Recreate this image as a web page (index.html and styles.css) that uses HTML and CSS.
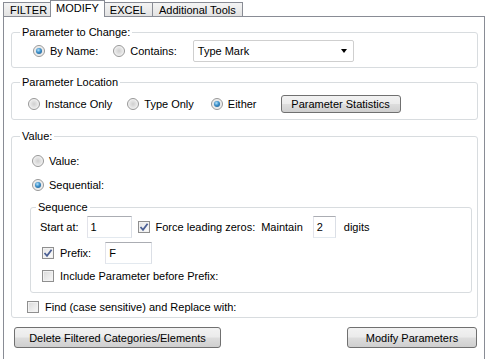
FILE: index.html
```html
<!DOCTYPE html>
<html lang="en">
<head>
  <meta charset="UTF-8" />
  <title>Modify Parameters</title>
  <link rel="stylesheet" href="styles.css">
</head>
<body>
  <div class="tabs">
    <div class="tab">FILTER</div>
    <div class="tab active">MODIFY</div>
    <div class="tab">EXCEL</div>
    <div class="tab">Additional Tools</div>
  </div>

  <div class="panel">
    <fieldset class="group g-change">
      <legend>Parameter to Change:</legend>
      <div class="row">
        <label class="opt"><span class="radio on"></span>By Name:</label>
        <label class="opt opt-contains"><span class="radio"></span>Contains:</label>
        <div class="combo">Type Mark<span class="arrow"></span></div>
      </div>
    </fieldset>

    <fieldset class="group g-location">
      <legend>Parameter Location</legend>
      <div class="row">
        <label class="opt"><span class="radio"></span>Instance Only</label>
        <label class="opt opt-type"><span class="radio"></span>Type Only</label>
        <label class="opt opt-either"><span class="radio on"></span>Either</label>
        <button class="btn btn-stats">Parameter Statistics</button>
      </div>
    </fieldset>

    <fieldset class="group g-value">
      <legend>Value:</legend>
      <div class="row row-value">
        <label class="opt"><span class="radio"></span>Value:</label>
      </div>
      <div class="row row-seq">
        <label class="opt"><span class="radio on"></span>Sequential:</label>
      </div>

      <fieldset class="group g-sequence">
        <legend>Sequence</legend>
        <div class="row row-start">
          <span>Start at:</span>
          <div class="field f-start">1</div>
          <span class="check on"><svg width="10" height="10" viewBox="0 0 10 10"><path d="M1.5 5 L4 7.8 L8.6 1.8" fill="none" stroke="#4b5f94" stroke-width="1.8"/></svg></span>
          <span class="lbl-zeros">Force leading zeros:</span>
          <span class="lbl-maintain">Maintain</span>
          <div class="field f-digits">2</div>
          <span class="lbl-digits">digits</span>
        </div>
        <div class="row row-prefix">
          <span class="check on"><svg width="10" height="10" viewBox="0 0 10 10"><path d="M1.5 5 L4 7.8 L8.6 1.8" fill="none" stroke="#4b5f94" stroke-width="1.8"/></svg></span>
          <span class="lbl">Prefix:</span>
          <div class="field f-prefix">F</div>
        </div>
        <div class="row row-include">
          <span class="check"></span>
          <span class="lbl">Include Parameter before Prefix:</span>
        </div>
      </fieldset>

      <div class="row row-find">
        <span class="check"></span>
        <span class="lbl">Find (case sensitive) and Replace with:</span>
      </div>
    </fieldset>

    <div class="actions">
      <button class="btn btn-delete">Delete Filtered Categories/Elements</button>
      <button class="btn btn-modify">Modify Parameters</button>
    </div>
  </div>
</body>
</html>
```

FILE: styles.css
```css
body {
  margin: 0;
  font-family: "Liberation Sans", Arial, sans-serif;
  font-size: 11px;
  color: #000;
  background: #fff;
  overflow: hidden;
}

/* pestañas */
.tabs {
  display: flex;
  align-items: flex-end;
  height: 16px;
  padding-left: 3px;
}

.tab {
  height: 13px;
  line-height: 14px;
  padding: 0 6px;
  border: 1px solid #898c95;
  border-bottom: none;
  margin-right: -1px;
  background: linear-gradient(#f4f4f4, #e3e3e3);
}

.tab.active {
  height: 16px;
  line-height: 14px;
  padding: 0 5px;
  margin: 0 -2px -1px -3px;
  background: #fff;
  position: relative;
  z-index: 1;
}

.panel {
  box-sizing: border-box;
  height: calc(100vh - 16px);
  border: 1px solid #898c95;
  border-bottom: none;
  margin: 0 1px 0 3px;
  padding: 8px 6px 0 7px;
}

/* grupos */
fieldset.group {
  margin: 0;
  padding: 0;
  min-width: 0;
  border: 1px solid #d8dcdf;
  border-radius: 3px;
}

legend {
  margin-left: 8px;
  padding: 0 2px;
  line-height: 14px;
}

.row {
  display: flex;
  align-items: center;
}

.opt {
  display: flex;
  align-items: center;
  gap: 5px;
}

.radio {
  flex: none;
  width: 12px;
  height: 12px;
  box-sizing: border-box;
  border: 1px solid #979797;
  border-radius: 50%;
  background: radial-gradient(circle, #cfcfcf 0, #e6e6e6 50%, #f7f7f7 75%, #fff 100%);
  position: relative;
}

.radio.on::after {
  content: '';
  position: absolute;
  inset: 2px;
  border-radius: 50%;
  background: radial-gradient(circle at 40% 35%, #b5e2fb 0, #3b8fc9 45%, #1c5485 100%);
}

.check {
  flex: none;
  width: 12px;
  height: 12px;
  box-sizing: border-box;
  border: 1px solid #8f8f8f;
  background: linear-gradient(135deg, #d9d9d9, #f8f8f8);
  box-shadow: inset 0 0 0 1px #f2f2f2;
  display: flex;
  align-items: center;
  justify-content: center;
}

.check.on {
  background: linear-gradient(135deg, #e4e4e4, #fdfdfd);
}

.field {
  box-sizing: border-box;
  height: 22px;
  line-height: 20px;
  padding-left: 3px;
  border: 1px solid;
  border-color: #abadb3 #dbdfe6 #e3e9ef #e2e3ea;
  background: #fff;
}

.combo {
  box-sizing: border-box;
  width: 161px;
  height: 22px;
  line-height: 20px;
  margin-left: 16px;
  padding-left: 4px;
  border: 1px solid #cfcfcf;
  border-radius: 2px;
  background: #fff;
  position: relative;
}

.combo .arrow {
  position: absolute;
  right: 6px;
  top: 8px;
  border-left: 3.5px solid transparent;
  border-right: 3.5px solid transparent;
  border-top: 4px solid #000;
}

.btn {
  box-sizing: border-box;
  height: 21px;
  padding: 0;
  font: inherit;
  color: #000;
  border: 1px solid #707070;
  border-radius: 3px;
  background: linear-gradient(#f2f2f2 0%, #ebebeb 48%, #dddddd 52%, #cfcfcf 100%);
}

/* Parameter to Change */
.g-change .row {
  padding: 1px 0 5px 21px;
}

.opt-contains {
  margin-left: 15px;
}

/* Parameter Location */
.g-location {
  margin-top: 7px !important;
}

.g-location .row {
  height: 20px;
  padding: 5px 0 5px 16px;
}

.opt-type {
  margin-left: 15px;
}

.opt-either {
  margin-left: 17px;
}

.btn-stats {
  width: 120px;
  height: 18px;
  margin-left: 24px;
}

/* Value */
.g-value {
  margin-top: 9px !important;
  padding-bottom: 2px !important;
}

.row-value,
.row-seq {
  height: 16px;
  padding-left: 20px;
}

.row-value {
  margin-top: 10px;
}

.row-seq {
  margin-top: 8px;
}

.g-sequence {
  margin: 7px 5px 0 18px !important;
  padding-bottom: 8px !important;
}

.g-sequence legend {
  margin-left: 5px;
}

.row-start {
  margin-top: 2px;
  padding-left: 9px;
}

.f-start {
  width: 45px;
  margin-left: 8px;
}

.row-start .check {
  margin-left: 6px;
}

.lbl-zeros {
  margin-left: 6px;
}

.lbl-maintain {
  margin-left: 6px;
}

.f-digits {
  width: 23px;
  margin-left: 10px;
}

.lbl-digits {
  margin-left: 8px;
}

.row-prefix {
  margin-top: 4px;
  padding-left: 11px;
}

.row-prefix .lbl,
.row-include .lbl {
  margin-left: 6px;
}

.f-prefix {
  width: 47px;
  margin-left: 14px;
}

.row-include {
  height: 16px;
  margin-top: 4px;
  padding-left: 11px;
}

.row-find {
  height: 16px;
  margin-top: 6px;
  padding-left: 15px;
}

.row-find .lbl {
  margin-left: 6px;
}

/* botones inferiores */
.actions {
  display: flex;
  justify-content: space-between;
  margin-top: 9px;
  padding: 0 1px 0 3px;
}

.btn-delete {
  width: 207px;
}

.btn-modify {
  width: 130px;
}
```
